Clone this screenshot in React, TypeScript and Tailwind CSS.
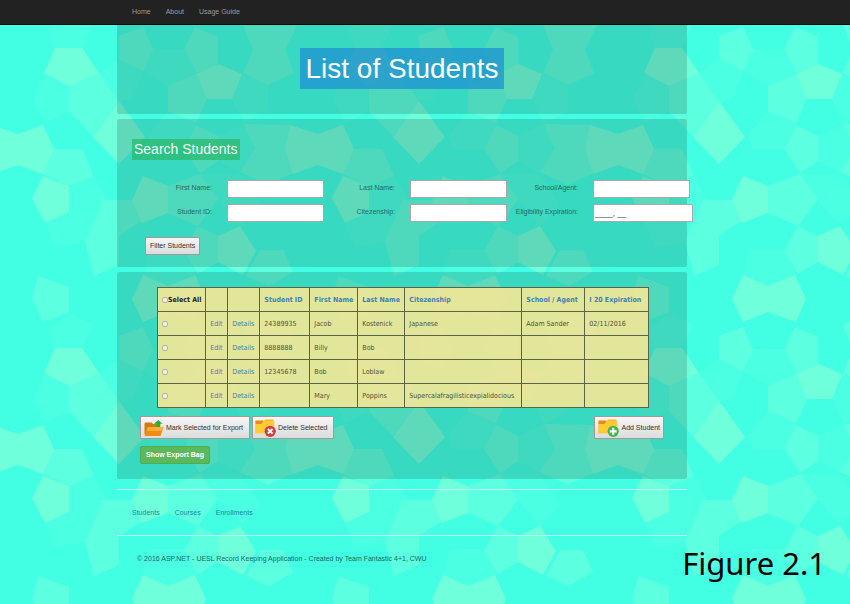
import React, { useState } from "react";

const LABEL = "text-[7px] leading-3 text-[#1f6b60]";
const INPUT =
  "h-[18px] rounded-none border border-[#a9a9a9] bg-white px-px text-[8px] leading-4 text-[#222] outline-none";
const BUTTON =
  "flex items-center gap-0.5 border border-[#a09a9a] bg-linear-to-b from-[#f6f6f6] to-[#dcdcdc] text-[7px] leading-3 text-[#333]";
const PANEL = "bg-black/15";

type Shape = { points: string; level: "high" | "mid" | "low" };

const SHAPES: Shape[] = [
  { level: "low", points: "48,30 69,14 93,24 82,48 55,48" },
  { level: "low", points: "33,99 45,74 69,86 69,111 45,123" },
  { level: "low", points: "148,136 168,111 196,123 184,149 153,149" },
  { level: "low", points: "218,136 244,124 255,149 240,173 218,161" },
  { level: "low", points: "150,249 185,249 197,274 168,286 143,275" },
  { level: "low", points: "153,49 184,49 197,73 168,86 143,71" },
  { level: "low", points: "119,59 143,71 133,99 119,101 99,73" },
  { level: "low", points: "200,174 240,174 260,205 240,226 218,199" },
  { level: "low", points: "69,186 94,176 107,199 85,242 55,248 45,223 69,212" },
  { level: "low", points: "242,74 268,85 268,111 244,124 232,99" },
  { level: "mid", points: "69,86 99,73 119,101 93,136 69,111" },
  { level: "mid", points: "53,149 82,149 94,176 69,186 43,174" },
  { level: "mid", points: "103,200 132,200 153,213 119,236 119,265 94,276 85,242" },
  { level: "mid", points: "168,186 200,174 218,199 198,226 168,213" },
  { level: "mid", points: "119,36 143,27 153,49 143,71 119,59" },
  { level: "mid", points: "195,27 218,37 218,64 197,73 184,49" },
  { level: "mid", points: "168,86 196,74 207,99 196,123 168,111" },
  { level: "mid", points: "196,125 218,136 218,161 200,173 184,149" },
  { level: "mid", points: "198,226 218,236 218,262 198,274 184,251" },
  { level: "mid", points: "243,25 268,12 297,25 285,50 294,73 268,85 243,73 253,50" },
  { level: "mid", points: "244,124 290,125 285,149 293,173 268,185 240,172 255,149" },
  { level: "mid", points: "260,250 283,250 293,272 269,286 246,276" },
  { level: "mid", points: "38,276 69,287 69,312 43,322 32,299" },
  { level: "mid", points: "38,-24 69,-13 69,12 43,22 32,-1" },
  { level: "high", points: "55,48 82,48 99,73 69,86 44,73" },
  { level: "high", points: "119,101 145,137 119,164 93,137" },
  { level: "high", points: "-10,125 18,134 43,125 54,149 43,174 18,165 -7,174 -15,149" },
  { level: "high", points: "290,125 318,134 318,165 293,174 285,149" },
  { level: "high", points: "43,176 69,186 69,212 45,223 32,198" },
  { level: "high", points: "143,176 168,186 168,213 142,223 132,200" },
  { level: "high", points: "143,275 168,286 195,275 206,299 196,322 168,312 143,322 132,299" },
  { level: "high", points: "143,-25 168,-14 195,-25 206,-1 196,22 168,12 143,22 132,-1" },
  { level: "high", points: "218,64 242,74 232,99 207,99 196,74" },
  { level: "high", points: "240,226 256,251 243,275 218,262 218,236" },
];

const FILLS = { low: "#4affe2", mid: "#5cffdf", high: "#6fffdb" };

function Backdrop() {
  return (
    <svg className="absolute inset-0 -z-10 h-full w-full" aria-hidden="true">
      <defs>
        <pattern id="pentagons" width="300" height="300" patternUnits="userSpaceOnUse">
          <rect width="300" height="300" fill="#42ffe3" />
          {SHAPES.map((s) => (
            <polygon key={s.points} points={s.points} fill={FILLS[s.level]} />
          ))}
        </pattern>
      </defs>
      <rect width="100%" height="100%" fill="url(#pentagons)" />
    </svg>
  );
}

function ExportIcon() {
  return (
    <svg width="20" height="18" viewBox="0 0 20 18" aria-hidden="true">
      <path d="M0.500 4.500 1.500 3.500h6l1.500 1.500H16V15H0.500z" fill="#d9780e" />
      <path d="M0.500 16.500 4 8h15.500l-3 9H1.500z" fill="#f08c14" />
      <path d="M4 8h15.500l-1.300 4H2.400z" fill="#fbae35" />
      <path d="M14.300 1 18.500 4.800h-2.200V8h-4V4.800H10z" fill="#2fae2b" />
    </svg>
  );
}

function YellowFolder() {
  return (
    <>
      <path d="M0.500 2h8l2-1.500h8V14H0.500z" fill="#f9b92a" />
      <path d="M0.500 1.500h8l-2 3.500h-6z" fill="#ea8b12" />
      <path d="M0.500 5h6l2.500-3H19.500L18.500 14.500H0.500z" fill="#fdcb33" />
    </>
  );
}

function DeleteIcon() {
  return (
    <svg width="21" height="18" viewBox="0 0 21 18" aria-hidden="true">
      <YellowFolder />
      <circle cx="15.200" cy="12.300" r="5.600" fill="#d23f43" />
      <path d="m12.900 10 4.600 4.600m0-4.600-4.600 4.600" stroke="#fff" strokeWidth="2" />
    </svg>
  );
}

function AddIcon() {
  return (
    <svg width="21" height="18" viewBox="0 0 21 18" aria-hidden="true">
      <YellowFolder />
      <circle cx="15.200" cy="12.300" r="5.600" fill="#43b649" />
      <path d="M15.200 8.800v7m-3.500-3.500h7" stroke="#fff" strokeWidth="2.200" />
    </svg>
  );
}

const FIELDS = [
  { id: "first", label: "First Name:" },
  { id: "last", label: "Last Name:" },
  { id: "school", label: "School/Agent:" },
  { id: "sid", label: "Student ID:" },
  { id: "citizenship", label: "Citezenship:" },
  { id: "expiration", label: "Eligibility Expiration:", value: "____, __" },
];

const COLUMNS = ["Student ID", "First Name", "Last Name", "Citezenship", "School / Agent", "I 20 Expiration"];

const STUDENTS = [
  ["24389935", "Jacob", "Kostenick", "Japanese", "Adam Sander", "02/11/2016"],
  ["8888888", "Billy", "Bob", "", "", ""],
  ["12345678", "Bob", "Loblaw", "", "", ""],
  ["", "Mary", "Poppins", "Supercalafragilisticexpialidocious", "", ""],
];

const CELL = "h-6 border border-[#5d6346] px-1 text-left whitespace-nowrap";
const CHECK =
  "block size-[6px] shrink-0 appearance-none rounded-[2px] border border-[#b5b5a4] bg-[#eeeedd] checked:bg-[#337ab7]";

export default function App() {
  const [picked, setPicked] = useState<boolean[]>(STUDENTS.map(() => false));
  const all = picked.every(Boolean);

  return (
    <div className="relative isolate min-h-screen overflow-hidden font-['Liberation_Sans',Arial,sans-serif]">
      <Backdrop />

      <nav className="h-[25px] border-b border-[#080808] bg-[#222] pr-[46px]">
        <div className="mx-auto flex h-6 max-w-[570px] items-center gap-[15px] px-[15px] text-[7px] leading-3 text-[#9d9d9d]">
          <a href="#home">Home</a>
          <a href="#about">About</a>
          <a href="#guide">Usage Guide</a>
        </div>
      </nav>

      <div className="pr-[46px]">
        <div className="mx-auto max-w-[570px]">
          <header className={`${PANEL} flex justify-center rounded-b-[2px] pt-[23px] pb-[25px]`}>
            <h1 className="bg-[#1e90d2]/75 px-[5px] text-[28px] leading-[41px] text-white">List of Students</h1>
          </header>

          <section className={`${PANEL} mt-[5px] rounded-[2px] px-[15px] pt-5 pb-3`}>
            <h2 className="w-fit bg-[#28b463]/65 px-0.5 text-[14px] leading-[21px] text-[#eafff8]">Search Students</h2>
            <form onSubmit={(e) => e.preventDefault()}>
              <div className="mt-5 grid grid-cols-[95px_88px_95px_88px_95px_88px] gap-y-1.5">
                {FIELDS.map((f) => (
                  <React.Fragment key={f.id}>
                    <label htmlFor={f.id} className={`${LABEL} pt-0.5 pr-[15px] text-right whitespace-nowrap`}>
                      {f.label}
                    </label>
                    <input
                      id={f.id}
                      type="text"
                      defaultValue={f.value}
                      className={`${INPUT} ${f.value ? "w-[100px]" : "w-[97px]"}`}
                    />
                  </React.Fragment>
                ))}
              </div>
              <button type="submit" className={`${BUTTON} mt-[15px] ml-[13px] h-[18px] px-1`}>
                Filter Students
              </button>
            </form>
          </section>

          <section className={`${PANEL} mt-[5px] rounded-[2px] px-[23px] py-[15px]`}>
            <table className="ml-[17px] border-collapse bg-[#f4e797]/90 font-['DejaVu_Sans_Condensed','DejaVu_Sans',Verdana,sans-serif] text-[7px] leading-3 text-[#4d5138]">
              <colgroup>
                <col className="w-12" />
                <col className="w-[22px]" />
                <col className="w-8" />
                <col className="w-[50px]" />
                <col className="w-12" />
                <col className="w-[47px]" />
                <col className="w-[117px]" />
                <col className="w-[63px]" />
                <col className="w-16" />
              </colgroup>
              <thead>
                <tr>
                  <th className={CELL}>
                    <label className="flex items-center text-[#222]">
                      <input
                        type="checkbox"
                        checked={all}
                        onChange={() => setPicked(picked.map(() => !all))}
                        className={CHECK}
                      />
                      Select All
                    </label>
                  </th>
                  <th className={CELL} />
                  <th className={CELL} />
                  {COLUMNS.map((c) => (
                    <th key={c} className={CELL}>
                      <a href="#sort" className="text-[#3f7fb5]">{c}</a>
                    </th>
                  ))}
                </tr>
              </thead>
              <tbody>
                {STUDENTS.map((row, r) => (
                  <tr key={r}>
                    <td className={CELL}>
                      <input
                        type="checkbox"
                        aria-label={`Select ${row[1]}`}
                        checked={picked[r]}
                        onChange={() => setPicked(picked.map((p, i) => (i === r ? !p : p)))}
                        className={CHECK}
                      />
                    </td>
                    <td className={CELL}>
                      <a href="#edit" className="text-[#4580ab]">Edit</a>
                    </td>
                    <td className={CELL}>
                      <a href="#details" className="text-[#4580ab]">Details</a>
                    </td>
                    {row.map((v, c) => (
                      <td key={c} className={CELL}>{v}</td>
                    ))}
                  </tr>
                ))}
              </tbody>
            </table>

            <div className="mt-2 flex gap-0.5">
              <button type="button" className={`${BUTTON} h-[23px] pr-[6px] pl-[3px]`}>
                <ExportIcon />
                Mark Selected for Export
              </button>
              <button type="button" className={`${BUTTON} h-[23px] pr-[6px] pl-0.5`}>
                <DeleteIcon />
                Delete Selected
              </button>
              <button type="button" className={`${BUTTON} ml-auto h-[23px] px-[3px]`}>
                <AddIcon />
                Add Student
              </button>
            </div>
            <button
              type="button"
              className="mt-[7px] block h-[18px] rounded-[2px] border border-[#4cae4c] bg-[#5cb85c] px-[5px] text-[7px] leading-3 font-bold text-white"
            >
              Show Export Bag
            </button>
          </section>

          <footer className="mt-2.5">
            <div className="flex h-[46px] items-center gap-[15px] border-t border-[#b5fff2] px-[15px] text-[7px] leading-3 text-[#1f86a0]">
              <a href="#students">Students</a>
              <a href="#courses">Courses</a>
              <a href="#enrollments">Enrollments</a>
            </div>
            <p className="border-t border-[#b5fff2] pt-[17px] pl-5 text-[7px] leading-3 text-[#186a5e]">
              © 2016 ASP.NET - UESL Record Keeping Application - Created by Team Fantastic 4+1, CWU
            </p>
          </footer>
        </div>
      </div>

      <p className="absolute right-6 bottom-[18px] font-['Noto_Sans',sans-serif] text-[31px] leading-[46px] text-black">
        Figure 2.1
      </p>
    </div>
  );
}
